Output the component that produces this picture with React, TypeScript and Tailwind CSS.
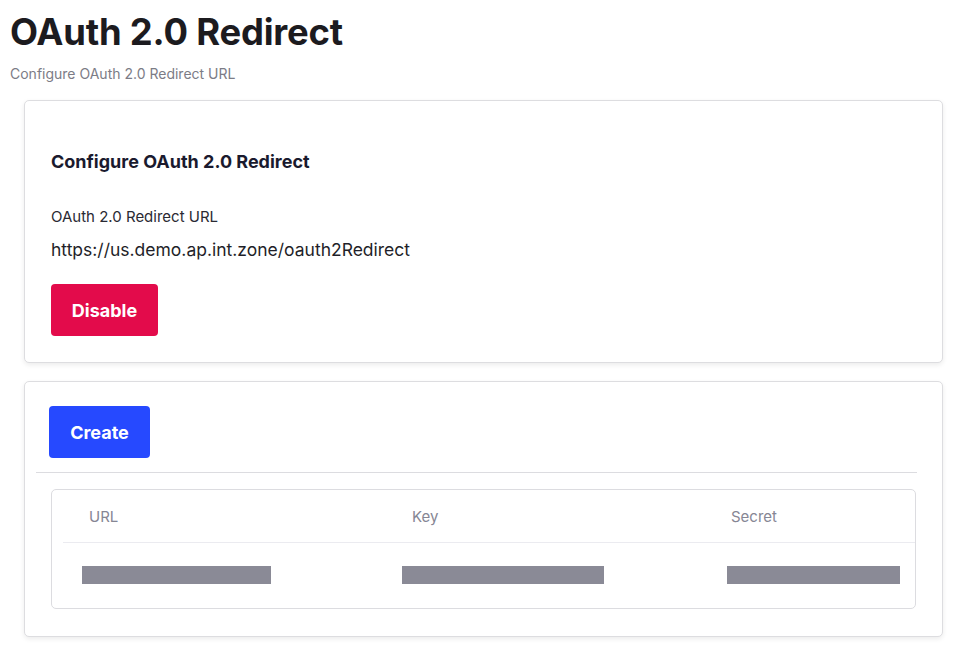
const font = { fontFamily: 'Inter, "Liberation Sans", sans-serif' }

function Bar({ width }: { width: string }) {
  return <div className={`h-[18px] bg-[#8a8a96] ${width}`} />
}

export default function App() {
  return (
    <div className="min-h-screen bg-white pb-3" style={font}>
      {/* Page header */}
      <div className="pl-[10px] pt-[11px]">
        <h1 className="text-[36.4px] leading-[42px] font-bold text-[#1c1b1f] tracking-[-0.2px]">
          OAuth 2.0 Redirect
        </h1>
        <p className="mt-[12px] text-[14px] leading-[17px] text-[#7c7c86]">
          Configure OAuth 2.0 Redirect URL
        </p>
      </div>

      {/* Redirect config card */}
      <div className="ml-[24px] mr-[24px] mt-[18px] rounded-[5px] border border-[#dddde0] bg-white shadow-[0_2px_5px_rgba(0,0,0,0.08)] px-[26px] pt-[50px] pb-[26px]">
        <h2 className="text-[18px] leading-[22px] font-bold text-[#1a1a2e]">
          Configure OAuth 2.0 Redirect
        </h2>
        <div className="mt-[36px] text-[15px] leading-[16px] text-[#2a2a33]">
          OAuth 2.0 Redirect URL
        </div>
        <div className="mt-[15px] text-[17.5px] leading-[20px] text-[#1f1f29]">
          https://us.demo.ap.int.zone/oauth2Redirect
        </div>
        <button className="mt-[24px] h-[52px] w-[107px] rounded-[4px] bg-[#e30b4b] text-white text-[18px] font-bold">
          Disable
        </button>
      </div>

      {/* Credentials card */}
      <div className="ml-[24px] mr-[24px] mt-[18px] rounded-[5px] border border-[#dddde0] bg-white shadow-[0_2px_5px_rgba(0,0,0,0.08)] pt-[24px] pb-[27px]">
        <div className="pl-[24px]">
          <button className="h-[52px] w-[101px] rounded-[4px] bg-[#2649ff] text-white text-[18px] font-bold">
            Create
          </button>
        </div>
        <div className="ml-[11px] mr-[25px] mt-[14px] border-t border-[#dcdce0]" />
        <div className="ml-[26px] mr-[26px] mt-[16px] rounded-[5px] border border-[#dcdce0]">
          <div className="ml-[11px] grid grid-cols-[339px_319px_1fr] h-[53px] pt-[2px] items-center border-b border-[#ebebf0] text-[15px] text-[#868694]">
            <span className="pl-[26px]">URL</span>
            <span className="pl-[10px]">Key</span>
            <span className="pl-[10px]">Secret</span>
          </div>
          <div className="ml-[11px] grid grid-cols-[339px_319px_1fr] h-[65px] items-center pb-[1px]">
            <div className="pl-[19px]">
              <Bar width="w-[189px]" />
            </div>
            <div>
              <Bar width="w-[202px]" />
            </div>
            <div className="pl-[6px]">
              <Bar width="w-[173px]" />
            </div>
          </div>
        </div>
      </div>
    </div>
  )
}
